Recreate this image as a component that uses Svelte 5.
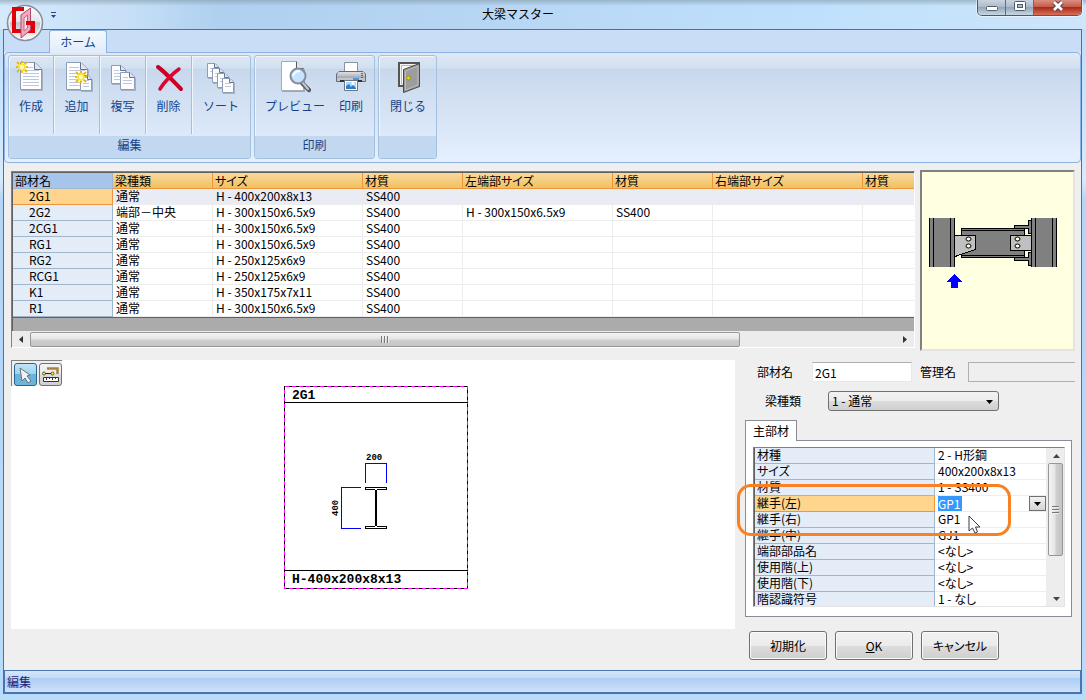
<script>
    let beamType = "1";
    let memberName = "2G1";
    let jointLeft = "GP1";

    const columns = ["部材名", "梁種類", "サイズ", "材質", "左端部サイズ", "材質", "右端部サイズ", "材質"];

    const members = [
        ["2G1", "通常", "H - 400x200x8x13", "SS400", "", "", "", ""],
        ["2G2", "端部－中央", "H - 300x150x6.5x9", "SS400", "H - 300x150x6.5x9", "SS400", "", ""],
        ["2CG1", "通常", "H - 300x150x6.5x9", "SS400", "", "", "", ""],
        ["RG1", "通常", "H - 300x150x6.5x9", "SS400", "", "", "", ""],
        ["RG2", "通常", "H - 250x125x6x9", "SS400", "", "", "", ""],
        ["RCG1", "通常", "H - 250x125x6x9", "SS400", "", "", "", ""],
        ["K1", "通常", "H - 350x175x7x11", "SS400", "", "", "", ""],
        ["R1", "通常", "H - 300x150x6.5x9", "SS400", "", "", "", ""],
    ];

    const properties = [
        ["材種", "2 - H形鋼"],
        ["サイズ", "400x200x8x13"],
        ["材質", "1 - SS400"],
        ["継手(左)", "GP1"],
        ["継手(右)", "GP1"],
        ["継手(中)", "GJ1"],
        ["端部部品名", "<なし>"],
        ["使用階(上)", "<なし>"],
        ["使用階(下)", "<なし>"],
        ["階認識符号", "1 - なし"],
    ];

    const ribbon = [
        {
            title: "編集",
            divided: true,
            items: [
                { label: "作成", icon: "new" },
                { label: "追加", icon: "add" },
                { label: "複写", icon: "copy" },
                { label: "削除", icon: "delete" },
                { label: "ソート", icon: "sort", wide: true },
            ],
        },
        {
            title: "印刷",
            items: [
                { label: "プレビュー", icon: "preview", wider: true },
                { label: "印刷", icon: "print" },
            ],
        },
        { title: "", items: [{ label: "閉じる", icon: "close", wide: true }] },
    ];
</script>

{#snippet page(x, y, w, h, fold)}
    <g transform="translate({x} {y})">
        <path d="M1 1H{w - fold + 1}L{w + 1} {fold + 1}V{h + 1}H1z" fill="#6f7f96" opacity=".45" />
        <path d="M.5 .5H{w - fold}L{w - .5} {fold}V{h - .5}H.5z" fill="#fdfdfe" stroke="#8d9db5" />
        <path d="M{w - fold - .5} .5V{fold + .5}H{w - .5}" fill="#dfe6f0" stroke="#64748e" />
        {#each Array(Math.floor((h - 7) / 3)) as _, i}
            <path d="M3 {i * 3 + 5.5}H{i * 3 + 5 < fold + 1 ? w - fold - 2 : w - 3}" stroke="#bcc9dd" />
        {/each}
    </g>
{/snippet}

{#snippet spark(x, y)}
    <g transform="translate({x} {y})">
        <path d="M0-6V6M-6 0H6M-5-5L5 5M5-5L-5 5" stroke="#e9b81a" stroke-width="2" />
        <path d="M0-4V4M-4 0H4M-3-3L3 3M3-3L-3 3" stroke="#ffee38" stroke-width="1.6" />
        <circle r="2.2" fill="#fffbb0" />
    </g>
{/snippet}

<div class="window">
    <header class="titlebar">
        <h1>大梁マスター</h1>
        <button class="app-button" aria-label="アプリケーションメニュー">
            <svg width="38" height="38" viewBox="0 0 38 38">
                <defs>
                    <linearGradient id="orb" x2="0" y2="1">
                        <stop offset="0" stop-color="#fff" />
                        <stop offset=".45" stop-color="#e2e5ea" />
                        <stop offset=".5" stop-color="#bfc5ce" />
                        <stop offset="1" stop-color="#fff" />
                    </linearGradient>
                </defs>
                <circle cx="19" cy="19" r="17.5" fill="url(#orb)" stroke="#87909c" stroke-width="1.5" />
                <circle cx="19" cy="19" r="16" fill="none" stroke="#f8f9fb" />
                <path d="M18 5H8V27H15M17 27H27V19H19" fill="none" stroke="#e00008" stroke-width="4" />
                <path d="M15 11L24.500 4V26L15 34z" fill="#f2a9c0" stroke="#b04a6c" />
                <path d="M18 14L21.500 11V24L18 27z" fill="#f4e6ec" stroke="#c46583" />
                <path d="M20 19H28" stroke="#e00008" stroke-width="4" />
            </svg>
        </button>
        <button class="quick-access" aria-label="クイックアクセス">
            <svg width="7" height="8" viewBox="0 0 7 8"><path d="M1 1.500H6" stroke="#26458c" /><path d="M1 4H6L3.500 7z" fill="#26458c" /></svg>
        </button>
        <div class="window-buttons">
            <button aria-label="最小化">
                <svg width="14" height="12" viewBox="0 0 14 12"><rect x="1.500" y="6.500" width="11" height="4" rx="1" fill="#fff" stroke="#565b68" /></svg>
            </button>
            <button aria-label="最大化">
                <svg width="14" height="12" viewBox="0 0 14 12"><rect x="1.500" y="1.500" width="11" height="9" rx="1" fill="#fff" stroke="#565b68" /><rect x="4.500" y="4.500" width="5" height="3" fill="#a8bed2" stroke="#565b68" /></svg>
            </button>
            <button class="close" aria-label="閉じる">
                <svg width="14" height="12" viewBox="0 0 14 12"><path d="M3 2L11 10M11 2L3 10" stroke="#5d4046" stroke-width="4.600" /><path d="M3 2L11 10M11 2L3 10" stroke="#fff" stroke-width="2.800" /></svg>
            </button>
        </div>
    </header>

    <div class="client">
        <nav class="tabs">
            <button class="ribbon-tab">ホーム</button>
        </nav>

        <div class="ribbon">
            {#each ribbon as group}
                <section class="group" class:divided={group.divided}>
                    <div class="commands">
                        {#each group.items as item}
                            <button class="command" class:wide={item.wide} class:wider={item.wider}>
                                <svg width="32" height="34" viewBox="0 0 32 34" fill="none" aria-hidden="true">
                                    {#if item.icon === "new"}
                                        {@render page(5, 2, 22, 28, 7)}
                                        {@render spark(7, 7)}
                                    {:else if item.icon === "add"}
                                        {@render page(5, 2, 22, 28, 7)}
                                        {@render page(19, 15, 12, 16, 4)}
                                        {@render spark(20, 17)}
                                    {:else if item.icon === "copy"}
                                        {@render page(4, 5, 15, 19, 5)}
                                        {@render page(13, 12, 15, 18, 5)}
                                    {:else if item.icon === "delete"}
                                        <path d="M5 7C12 12 19 20 28 29" stroke="#c90021" stroke-width="4" stroke-linecap="round" />
                                        <path d="M26 9C18 15 12 21 7 29" stroke="#d90832" stroke-width="3.500" stroke-linecap="round" />
                                    {:else if item.icon === "sort"}
                                        {@render page(2, 3, 12, 15, 4)}
                                        {@render page(7, 8, 12, 15, 4)}
                                        {@render page(12, 13, 12, 15, 4)}
                                        {@render page(17, 18, 12, 15, 4)}
                                    {:else if item.icon === "preview"}
                                        <path d="M3 3H19L26 10V32H3z" fill="#76849a" opacity=".6" />
                                        <path d="M2.500 1.500H17L24.500 9V30.500H2.500z" fill="#fff" stroke="#a2acba" />
                                        <path d="M17.500 1.500V8.500H24.500" fill="#e1e4e9" stroke="#52596a" />
                                        <path d="M23 23L30 30" stroke="#555c66" stroke-width="4.500" stroke-linecap="round" />
                                        <path d="M23 22L29 29" stroke="#c5c8cf" stroke-width="2" stroke-linecap="round" />
                                        <circle cx="19" cy="16" r="7.500" fill="#c6e4ff" stroke="#858d99" stroke-width="2" />
                                        <path d="M14 16C15 12 18 11 21 11" stroke="#f7fcff" stroke-width="2" />
                                    {:else if item.icon === "print"}
                                        <path d="M9.500 2.500H22.500V13H9.500z" fill="#fff" stroke="#8992a0" />
                                        <path d="M4 11.500H28L30.500 14V21.500H1.500V14z" fill="#c3c5ca" stroke="#666b76" />
                                        <path d="M3 13H29" stroke="#e9ebef" />
                                        <path d="M2 17H30" stroke="#9699a1" />
                                        <path d="M5 21H27" stroke="#30343d" stroke-width="2" />
                                        <path d="M27 13V19" stroke="#5d626b" stroke-dasharray="1 1" stroke-width="2" />
                                        <path d="M18 19H24" stroke="#4298ed" stroke-width="2" />
                                        <path d="M9.500 20.500H22.500V30.500H9.500z" fill="#fff" stroke="#6c7583" />
                                        <path d="M11 22H21V29H11z" fill="#a5daff" />
                                        <path d="M11 29V26L14 24L16 27L18 25L21 28V29z" fill="#3379ca" />
                                        <circle cx="18" cy="23.500" r="1.500" fill="#fff" />
                                    {:else}
                                        <path d="M7 3H27V26H7z" fill="#f4f4f4" stroke="#555" stroke-width="2" />
                                        <path d="M9.500 5.500H25V24H9.500z" fill="#fff" stroke="#bbb" />
                                        <path d="M11.500 9.500L27.500 3.500V26.500L11.500 32.500z" fill="#969696" stroke="#494949" />
                                        <path d="M13.500 11L26 6V25L13.500 30z" fill="#9d9d9d" stroke="#bdbdbd" />
                                        <circle cx="16.500" cy="18" r="2" fill="#e9df00" stroke="#8a8300" stroke-width=".700" />
                                    {/if}
                                </svg>
                                <span>{item.label}</span>
                            </button>
                        {/each}
                    </div>
                    <div class="group-title">{group.title}</div>
                </section>
            {/each}
        </div>

        <main>
            <div class="upper">
                <div class="list">
                    <div class="list-view">
                        <table class="members">
                            <colgroup>
                                <col class="c100" /><col class="c100" /><col class="c150" /><col class="c100" />
                                <col class="c150" /><col class="c100" /><col class="c150" /><col class="c100" />
                            </colgroup>
                            <thead>
                                <tr>
                                    {#each columns as column}
                                        <th>{column}</th>
                                    {/each}
                                </tr>
                            </thead>
                            <tbody>
                                {#each members as member, i}
                                    <tr class:selected={i === 0}>
                                        {#each member as cell}
                                            <td>{cell}</td>
                                        {/each}
                                    </tr>
                                {/each}
                            </tbody>
                        </table>
                    </div>
                    <div class="hscroll">
                        <button aria-label="左へ"><svg width="4" height="7" viewBox="0 0 4 7"><path d="M4 0V7L0 3.500z" fill="#333" /></svg></button>
                        <div class="track"><div class="thumb"><i></i><i></i><i></i></div></div>
                        <button aria-label="右へ"><svg width="4" height="7" viewBox="0 0 4 7"><path d="M0 0V7L4 3.500z" fill="#333" /></svg></button>
                    </div>
                </div>

                <div class="guide">
                    <svg width="151" height="177" viewBox="7 7 151 177" shape-rendering="crispEdges">
                        <g fill="#808080" stroke="#000">
                            <path d="M99.500 60.500H113.500V55.500H116.500V68.500H113.500V63.500H99.500zM99.500 92.500H113.500V87.500H116.500V100.500H113.500V95.500H99.500z" />
                            <path d="M46.500 63.500H109.500V92.500H46.500zM46 65.500H110M46 90.500H110" />
                        </g>
                        <path d="M14 53H40V102H14zM116 53H142V102H116z" fill="#808080" />
                        <path d="M14.500 53V102M18.500 53V102M35.500 53V102M39.500 53V102M116.500 53V102M120.500 53V102M137.500 53V102M141.500 53V102" stroke="#000" />
                        <path d="M40 70.500H60.500V84.500L40 91.500M116 70.500H95.500V85.500H116" fill="#c0c0c0" stroke="#000" />
                        <g fill="#ffffe1" stroke="#000" shape-rendering="auto">
                            <ellipse cx="53.500" cy="74" rx="2.500" ry="2" /><ellipse cx="53.500" cy="81" rx="2.500" ry="2" />
                            <ellipse cx="102.500" cy="74" rx="2.500" ry="2" /><ellipse cx="102.500" cy="81" rx="2.500" ry="2" />
                        </g>
                        <path d="M39.500 109L47 117H43V123H36V117H32z" fill="#00f" />
                    </svg>
                </div>
            </div>

            <div class="lower">
                <div class="canvas">
                    <div class="tools">
                        <button class="active" aria-label="選択">
                            <svg width="20" height="20" viewBox="0 0 20 20"><path d="M4 3L14 10L11 11L15 16L12 18L9 13L6 16z" fill="#f0f0f0" stroke="#68727a" /></svg>
                        </button>
                        <button aria-label="寸法">
                            <svg width="20" height="20" viewBox="0 0 20 20"><path d="M6 3.500H16.500V9" fill="none" stroke="#a9803e" stroke-width="2.500" /><path d="M3 8.500H12" stroke="#222" /><circle cx="3" cy="8.500" r="1.500" fill="#ff0" stroke="#333" stroke-width=".800" /><circle cx="11.500" cy="8.500" r="1.500" fill="#ff0" stroke="#333" stroke-width=".800" /><path d="M2.500 12.500H17.500V16.500H2.500zM5.500 12V15M8.500 12V14M11.500 12V15M14.500 12V14" fill="#fff" stroke="#333" /></svg>
                        </button>
                    </div>
                    <svg class="drawing" width="184" height="203" viewBox="0 0 184 203">
                        <g fill="none" shape-rendering="crispEdges">
                            <path d="M.5 .5H183.500V202.500H.5z" stroke="#000" />
                            <path d="M.5 .5H183.500V202.500H.5z" stroke="#f0f" stroke-dasharray="4 3" />
                            <path d="M0 16.500H184M0 184.500H184" stroke="#000" />
                            <path d="M81.500 97V77.500H102.500V97M77 101.500H57.500V142.500H77" stroke="#00f" />
                            <path d="M81.500 101.500H102.500V103.500H93.500L92.500 105V139L93.500 140.500H102.500V142.500H81.500V140.500H90.500L91.500 139V105L90.500 103.500H81.500z" stroke="#000" />
                        </g>
                        <text x="8" y="13">2G1</text>
                        <text x="8" y="197">H-400x200x8x13</text>
                        <text class="dim" x="82" y="74">200</text>
                        <text class="dim" transform="translate(54 130) rotate(-90)">400</text>
                    </svg>
                </div>

                <form class="editor" on:submit|preventDefault>
                    <div class="field-row">
                        <label for="member-name">部材名</label>
                        <input id="member-name" type="text" bind:value={memberName} />
                        <label for="control-name">管理名</label>
                        <input id="control-name" type="text" disabled />
                    </div>
                    <div class="field-row type-row">
                        <label for="beam-type">梁種類</label>
                        <div class="select">
                            <select id="beam-type" bind:value={beamType}>
                                <option value="1">1 - 通常</option>
                            </select>
                            <svg width="7" height="4" viewBox="0 0 7 4"><path d="M0 0H7L3.500 4z" /></svg>
                        </div>
                    </div>

                    <button type="button" class="page-tab">主部材</button>
                    <div class="tab-page">
                        <div class="properties">
                            <div class="rows">
                                <table>
                                    <tbody>
                                        {#each properties as [name, value], i}
                                            <tr class:current={i === 3}>
                                                <th scope="row">{name}</th>
                                                <td>
                                                    {#if i === 3}
                                                        <div class="combo">
                                                            <input type="text" aria-label={name} bind:value={jointLeft} />
                                                            <button type="button" aria-label="一覧">
                                                                <svg width="7" height="4" viewBox="0 0 7 4"><path d="M0 0H7L3.500 4z" /></svg>
                                                            </button>
                                                        </div>
                                                    {:else}
                                                        {value}
                                                    {/if}
                                                </td>
                                            </tr>
                                        {/each}
                                    </tbody>
                                </table>
                            </div>
                            <div class="vscroll">
                                <button type="button" aria-label="上へ"><svg width="7" height="4" viewBox="0 0 7 4"><path d="M0 4H7L3.500 0z" fill="#444" /></svg></button>
                                <div class="track"><div class="thumb"><i></i><i></i><i></i></div></div>
                                <button type="button" aria-label="下へ"><svg width="7" height="4" viewBox="0 0 7 4"><path d="M0 0H7L3.500 4z" fill="#444" /></svg></button>
                            </div>
                            <div class="highlight"></div>
                            <svg class="cursor" width="13" height="19" viewBox="0 0 13 19"><path d="M1 1V16L4.500 13L7 18L9.500 17L7.500 12H12z" fill="#fff" stroke="#3a3a52" /></svg>
                        </div>
                    </div>

                    <div class="actions">
                        <button type="button">初期化</button>
                        <button type="submit"><span><u>O</u>K</span></button>
                        <button type="button">キャンセル</button>
                    </div>
                </form>
            </div>
        </main>

        <footer>編集</footer>
    </div>
</div>

<style>
    :global(body) {
        margin: 0;
    }

    .window,
    .window :global(*) {
        box-sizing: border-box;
    }

    .window {
        display: flex;
        flex-direction: column;
        min-height: 100vh;
        padding: 0 4px 6px 3px;
        background: linear-gradient(#bbdcfa, #d5eafd 180px, #b2d5f8 200px, #b9dcfc);
        font-family: "Noto Sans CJK JP", sans-serif;
        font-size: 12px;
        line-height: 16px;
        color: #000;
    }

    button,
    input,
    select {
        margin: 0;
        padding: 0;
        border: 0;
        border-radius: 0;
        background: none;
        font: inherit;
        color: inherit;
    }

    svg {
        display: block;
        flex: none;
    }

    .titlebar {
        position: relative;
        height: 29px;
        margin: 0 -4px 0 -3px;
        padding: 6px 50px 0 0;
        background:
            linear-gradient(rgba(130, 155, 170, .6), rgba(160, 190, 210, 0) 6px),
            linear-gradient(90deg, #d5e9fb, #c6dff7 12%, #afd0ef 20%, #b7d6f4 45%, #bfe0fc 75%, #cde6fb);
    }

    h1 {
        margin: 0;
        font-size: 12px;
        font-weight: 400;
        line-height: 16px;
        text-align: center;
    }

    .app-button {
        position: absolute;
        z-index: 2;
        left: 6px;
        top: 4px;
    }

    .quick-access {
        position: absolute;
        left: 50px;
        top: 11px;
    }

    .window-buttons {
        position: absolute;
        top: 0;
        right: 4px;
        display: flex;
        height: 16px;
        border: 1px solid #4e5967;
        border-top: 0;
        border-radius: 0 0 5px 5px;
        box-shadow: 0 0 0 1px rgba(255, 255, 255, .5);
        overflow: hidden;
    }

    .window-buttons button {
        display: flex;
        justify-content: center;
        width: 28px;
        background: linear-gradient(#c8d3de, #acbccc 45%, #94a6b8 50%, #c6d6e4);
        border-right: 1px solid #5f6c7c;
    }

    .window-buttons .close {
        width: 47px;
        border: 0;
        background: linear-gradient(#d99085, #c95a48 45%, #aa2a17 50%, #d8705a);
    }

    .client {
        display: flex;
        flex: 1;
        flex-direction: column;
        border: 1px solid #566f8c;
        background: #efefef;
    }

    .tabs {
        height: 22px;
        padding-left: 45px;
        background: #c9ddf6;
    }

    .ribbon-tab {
        position: relative;
        width: 58px;
        height: 23px;
        border: 1px solid #8db2e3;
        border-bottom: 0;
        border-radius: 3px 3px 0 0;
        background: linear-gradient(#f2f8ff, #e1ecfa);
        color: #15428b;
    }

    .ribbon {
        display: flex;
        gap: 3px;
        height: 111px;
        padding: 2px 3px 3px;
        border: 1px solid #8db2e3;
        border-radius: 4px;
        background: linear-gradient(#dfe9f5, #d3e0f0 15px, #c8d8ec 16px, #e5f0ff);
    }

    .group {
        display: flex;
        flex-direction: column;
        border: 1px solid #a3c0de;
        border-radius: 3px;
        box-shadow: inset 1px 1px 0 rgba(255, 255, 255, .6);
        overflow: hidden;
    }

    .commands {
        display: flex;
        flex: 1;
        padding: 0 3px 0 4px;
    }

    .divided .commands {
        padding: 0;
    }

    .command {
        display: flex;
        flex-direction: column;
        align-items: center;
        width: 40px;
        padding-top: 4px;
        color: #15428b;
    }

    .command svg {
        margin-bottom: 4px;
    }

    .divided .command {
        width: 46px;
        height: 78px;
        border-right: 1px solid #9fc0e8;
        box-shadow: 1px 0 0 #eef5fd;
    }

    .divided .command:first-child {
        width: 45px;
    }

    .command.wide {
        width: 50px;
    }

    .divided .command.wide {
        width: 58px;
        border-right: 0;
        box-shadow: none;
    }

    .command.wider {
        width: 72px;
    }

    .group-title {
        height: 22px;
        padding-top: 1px;
        background: #c1d8f0;
        color: #15428b;
        text-align: center;
    }

    main {
        display: flex;
        flex: 1;
        flex-direction: column;
        gap: 9px;
        padding: 7px 6px 9px 7px;
        font-feature-settings: "palt";
    }

    .upper {
        display: flex;
        gap: 5px;
    }

    .list {
        flex: 1;
        min-width: 0;
        margin: 1px 0 3px;
        border: 1px solid #808080;
        border-right-color: #fff;
        border-bottom-color: #fff;
    }

    .list-view {
        height: 159px;
        border-top: 1px solid #606060;
        border-left: 1px solid #606060;
        background: #ababab;
        overflow: hidden;
    }

    table {
        border-collapse: separate;
        border-spacing: 0;
        table-layout: fixed;
    }

    th,
    td {
        height: 16px;
        padding: 0 2px;
        font-weight: 400;
        line-height: 13px;
        text-align: left;
        vertical-align: top;
        white-space: nowrap;
    }

    .members {
        width: 950px;
        border-bottom: 1px solid #606060;
    }

    .c100 {
        width: 100px;
    }

    .c150 {
        width: 150px;
    }

    .members th {
        border-right: 1px solid #f29536;
        border-bottom: 1px solid #f29536;
        background: linear-gradient(#f9d99f, #f1c15f);
        line-height: 15px;
    }

    .members th:first-child {
        border-color: #9eb6ce;
        background: #a7c4eb;
    }

    .members td {
        padding-left: 3px;
        border-right: 1px solid #ededed;
        border-bottom: 1px solid #ededed;
        background: #fff;
    }

    .members td:first-child {
        padding-left: 16px;
        border-color: #9eb6ce;
        background: #e4ecf7;
    }

    .members .selected td {
        background: #e9ebf5;
    }

    .members .selected td:first-child {
        border-color: #f29536;
        background: #ffd58d;
    }

    .hscroll {
        display: flex;
        height: 16px;
        padding-top: 1px;
        background: #ececec;
    }

    .hscroll button,
    .vscroll button {
        display: flex;
        align-items: center;
        justify-content: center;
        width: 18px;
        height: 15px;
    }

    .track {
        flex: 1;
    }

    .thumb {
        display: flex;
        align-items: center;
        justify-content: center;
        gap: 1px;
        border: 1px solid #979797;
        border-radius: 2px;
    }

    .hscroll .thumb {
        width: 82%;
        height: 15px;
        background: linear-gradient(#f4f4f4, #e4e4e4 48%, #cfcfcf 52%, #c4c4c4);
    }

    .hscroll i {
        width: 2px;
        height: 7px;
        background: #777;
        border-right: 1px solid #eee;
    }

    .guide {
        width: 155px;
        height: 181px;
        border: 2px solid #808080;
        border-right-color: #e3e3e3;
        border-bottom-color: #e3e3e3;
        background: #ffffe1;
    }

    .lower {
        display: flex;
        flex: 1;
        gap: 10px;
    }

    .canvas {
        display: flex;
        flex: 1;
        flex-direction: column;
        align-self: flex-start;
        height: 269px;
        background: #fff;
    }

    .tools {
        display: flex;
        gap: 2px;
        align-self: flex-start;
        padding: 2px 0 0 2px;
        border-top: 1px solid #808080;
        border-left: 1px solid #808080;
        background: #efefef;
    }

    .tools button {
        display: flex;
        align-items: center;
        justify-content: center;
        width: 23px;
        height: 23px;
        border: 1px solid #707070;
        border-radius: 3px;
        background: linear-gradient(#f2f2f2, #ebebeb 50%, #dddddd 50%, #cfcfcf);
    }

    .tools .active {
        border-color: #2c628b;
        background: linear-gradient(#c4e5f6, #98d1ef 50%, #68b3db 50%, #6db5dd);
    }

    .drawing {
        align-self: center;
        margin-left: 6px;
    }

    .drawing text {
        font-family: "Liberation Mono", monospace;
        font-size: 13px;
        font-weight: 700;
    }

    .drawing .dim {
        font-size: 9px;
    }

    .editor {
        width: 330px;
        padding-top: 2px;
    }

    .field-row {
        display: flex;
        align-items: center;
        height: 20px;
        padding-left: 12px;
        overflow: hidden;
    }

    .field-row label {
        flex: none;
        width: 48px;
    }

    .field-row input {
        flex: none;
        width: 100px;
        height: 20px;
        margin: 0 8px 0 7px;
        padding: 0 2px;
        border: 1px solid #e3e9ef;
        border-top-color: #abadb3;
        background: #fff;
    }

    .field-row label + input:disabled {
        width: 120px;
        margin: 0;
        border: 1px solid #afafaf;
        background: #efefef;
    }

    .type-row {
        height: 22px;
        margin-top: 8px;
        padding-left: 20px;
    }

    .select {
        display: flex;
        align-items: center;
        width: 171px;
        margin-left: 15px;
        border: 1px solid #707070;
        border-radius: 3px;
        background: linear-gradient(#f2f2f2, #ebebeb 50%, #dddddd 50%, #cfcfcf);
    }

    .select select {
        flex: 1;
        height: 18px;
        padding-left: 3px;
        appearance: none;
    }

    .select svg {
        margin: 2px 5px 0 -12px;
        pointer-events: none;
    }

    .page-tab {
        position: relative;
        z-index: 1;
        display: block;
        width: 52px;
        height: 21px;
        margin-top: 8px;
        border: 1px solid #898c95;
        border-bottom: 0;
        background: #fff;
        line-height: 16px;
    }

    .tab-page {
        width: 327px;
        margin-top: -1px;
        padding: 6px 6px 9px 7px;
        border: 1px solid #898c95;
        background: #fff;
    }

    .properties {
        position: relative;
        display: flex;
        height: 160px;
        border: 1px solid #808080;
        border-right-color: #e3e3e3;
        border-bottom-color: #e3e3e3;
    }

    .rows {
        flex: 1;
        height: 158px;
        overflow: hidden;
    }

    .rows table {
        width: 100%;
        border-left: 1px solid #606060;
    }

    .rows th {
        width: 180px;
        border-right: 1px solid #9eb6ce;
        border-bottom: 1px solid #9eb6ce;
        background: #e4ecf7;
    }

    .rows td {
        padding-left: 3px;
        border-right: 1px solid #ededed;
        border-bottom: 1px solid #ededed;
    }

    .rows .current th {
        border-color: #f29536;
        background: #ffd58d;
    }

    .rows .current td {
        padding-right: 0;
    }

    .combo {
        display: flex;
        align-items: flex-start;
        justify-content: space-between;
        height: 15px;
    }

    .combo input {
        width: 24px;
        height: 15px;
        background: #3399ff;
        color: #fff;
        line-height: 15px;
    }

    .combo button {
        display: flex;
        align-items: center;
        justify-content: center;
        width: 17px;
        height: 15px;
        border: 1px solid #707070;
        background: linear-gradient(#f2f2f2, #d4d4d4);
    }

    .vscroll {
        display: flex;
        flex-direction: column;
        width: 17px;
        background: #ededed;
    }

    .vscroll .thumb {
        flex-direction: column;
        width: 15px;
        height: 73%;
        margin: 0 1px;
        background: linear-gradient(90deg, #f4f4f4, #e4e4e4 48%, #cfcfcf 52%, #c4c4c4);
    }

    .vscroll i {
        width: 7px;
        height: 2px;
        background: #777;
        border-bottom: 1px solid #eee;
    }

    /* callout and pointer float over the grid */
    .highlight {
        position: absolute;
        left: -17px;
        top: 36px;
        width: 274px;
        height: 52px;
        border: 3px solid #f98124;
        border-radius: 14px;
        pointer-events: none;
    }

    .cursor {
        position: absolute;
        left: 214px;
        top: 67px;
    }

    .actions {
        display: flex;
        gap: 8px;
        margin: 14px 0 0 4px;
    }

    .actions button {
        width: 78px;
        height: 29px;
        border: 1px solid #707070;
        border-radius: 3px;
        box-shadow: inset 0 0 0 1px #fafafa;
        background: linear-gradient(#f2f2f2, #ebebeb 50%, #dddddd 50%, #cfcfcf);
        line-height: 14px;
    }

    footer {
        height: 23px;
        padding: 3px 2px;
        border: 1px solid #4a77b0;
        background: linear-gradient(#d7e6f9, #c3daf7 32%, #aecdf2 36%, #cfe2fa);
        color: #1e1e7a;
    }
</style>
